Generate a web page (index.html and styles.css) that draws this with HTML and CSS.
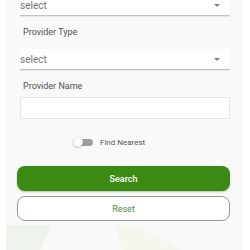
FILE: index.html
```html
<!DOCTYPE html>
<html>
<head>
<meta charset="utf-8">
<link rel="stylesheet" href="styles.css">
</head>
<body>
<div class="panel">
  <svg class="deco" width="238" height="40" viewBox="0 0 238 40">
    <polygon points="0,40 0,15 46,15 34,40" fill="#eef3ec"/>
    <path d="M111,15 C130,15 150,25 175,40 L118,40 C112,32 110,22 111,15 Z" fill="#f5f6ee"/>
  </svg>
  <div class="form">
    <div class="select first"><span>select</span><i class="arrow"></i></div>
    <div class="label">Provider Type</div>
    <div class="select"><span>select</span><i class="arrow"></i></div>
    <div class="label">Provider Name</div>
    <div class="input"></div>
    <div class="toggle-row">
      <div class="toggle"><div class="track"></div><div class="thumb"></div></div>
      <span class="toggle-text">Find Nearest</span>
    </div>
    <div class="btn primary">Search</div>
    <div class="btn secondary">Reset</div>
  </div>
</div>
</body>
</html>
```
FILE: styles.css
```css
html, body { margin: 0; padding: 0; background: #ffffff; }
body { font-family: Roboto, "Noto Sans", sans-serif; width: 250px; height: 250px; overflow: hidden; }
.panel {
  position: relative;
  margin-left: 6px;
  width: 237px;
  height: 250px;
  background: #f9f9f9;
}
.deco { position: absolute; left: 0; bottom: 0; }
.form { position: relative; display: flex; flex-direction: column; padding: 0 13px 0 11px; }
.select {
  margin-left: 3px;
  height: 20px;
  background: #fff;
  border-bottom: 1px solid #c4c4c4;
  box-shadow: 0 1px 0 #e6e6e6;
  display: flex;
  align-items: center;
  justify-content: space-between;
  padding-right: 10px;
  font-size: 10px;
  color: #757575;
}
.select.first { margin-top: -5px; }
.arrow {
  width: 0; height: 0;
  border-left: 3px solid transparent;
  border-right: 3px solid transparent;
  border-top: 3px solid #808080;
  margin-top: 1px;
}
.label {
  margin: 10px 0 0 6px;
  height: 12px;
  line-height: 12px;
  font-size: 9px;
  color: #505050;
  font-weight: 400;
}
.label + .select { margin-top: 11px; }
.label + .input { margin-top: 5px; }
.input {
  margin-left: 3px;
  height: 20px;
  background: #fff;
  border: 1px solid #e4e4e4;
  border-radius: 2px;
}
.toggle-row {
  margin-top: 17px;
  display: flex;
  align-items: center;
  padding-left: 56px;
  height: 12px;
}
.toggle { position: relative; width: 21px; height: 12px; }
.track {
  position: absolute; left: 4px; top: 3px;
  width: 16px; height: 7px; border-radius: 4px; background: #9e9e9e;
}
.thumb {
  position: absolute; left: 0; top: 1px;
  width: 10px; height: 10px; border-radius: 50%;
  background: #fafafa; box-shadow: 0 0.5px 1.5px rgba(0,0,0,0.4);
}
.toggle-text { margin-left: 6px; font-size: 8px; color: #555; font-weight: 400; }
.btn {
  height: 25px;
  border-radius: 8px;
  display: flex; align-items: center; justify-content: center;
  font-size: 9px;
}
.primary {
  margin-top: 18px;
  background: #3b8a14;
  color: #fff;
  font-weight: 500;
  box-shadow: 0 1px 2px rgba(0,0,0,0.25);
}
.secondary {
  margin-top: 5px;
  background: #fff;
  color: #4e8a3c;
  border: 1px solid #8fa08f;
  height: 23px;
}
```
